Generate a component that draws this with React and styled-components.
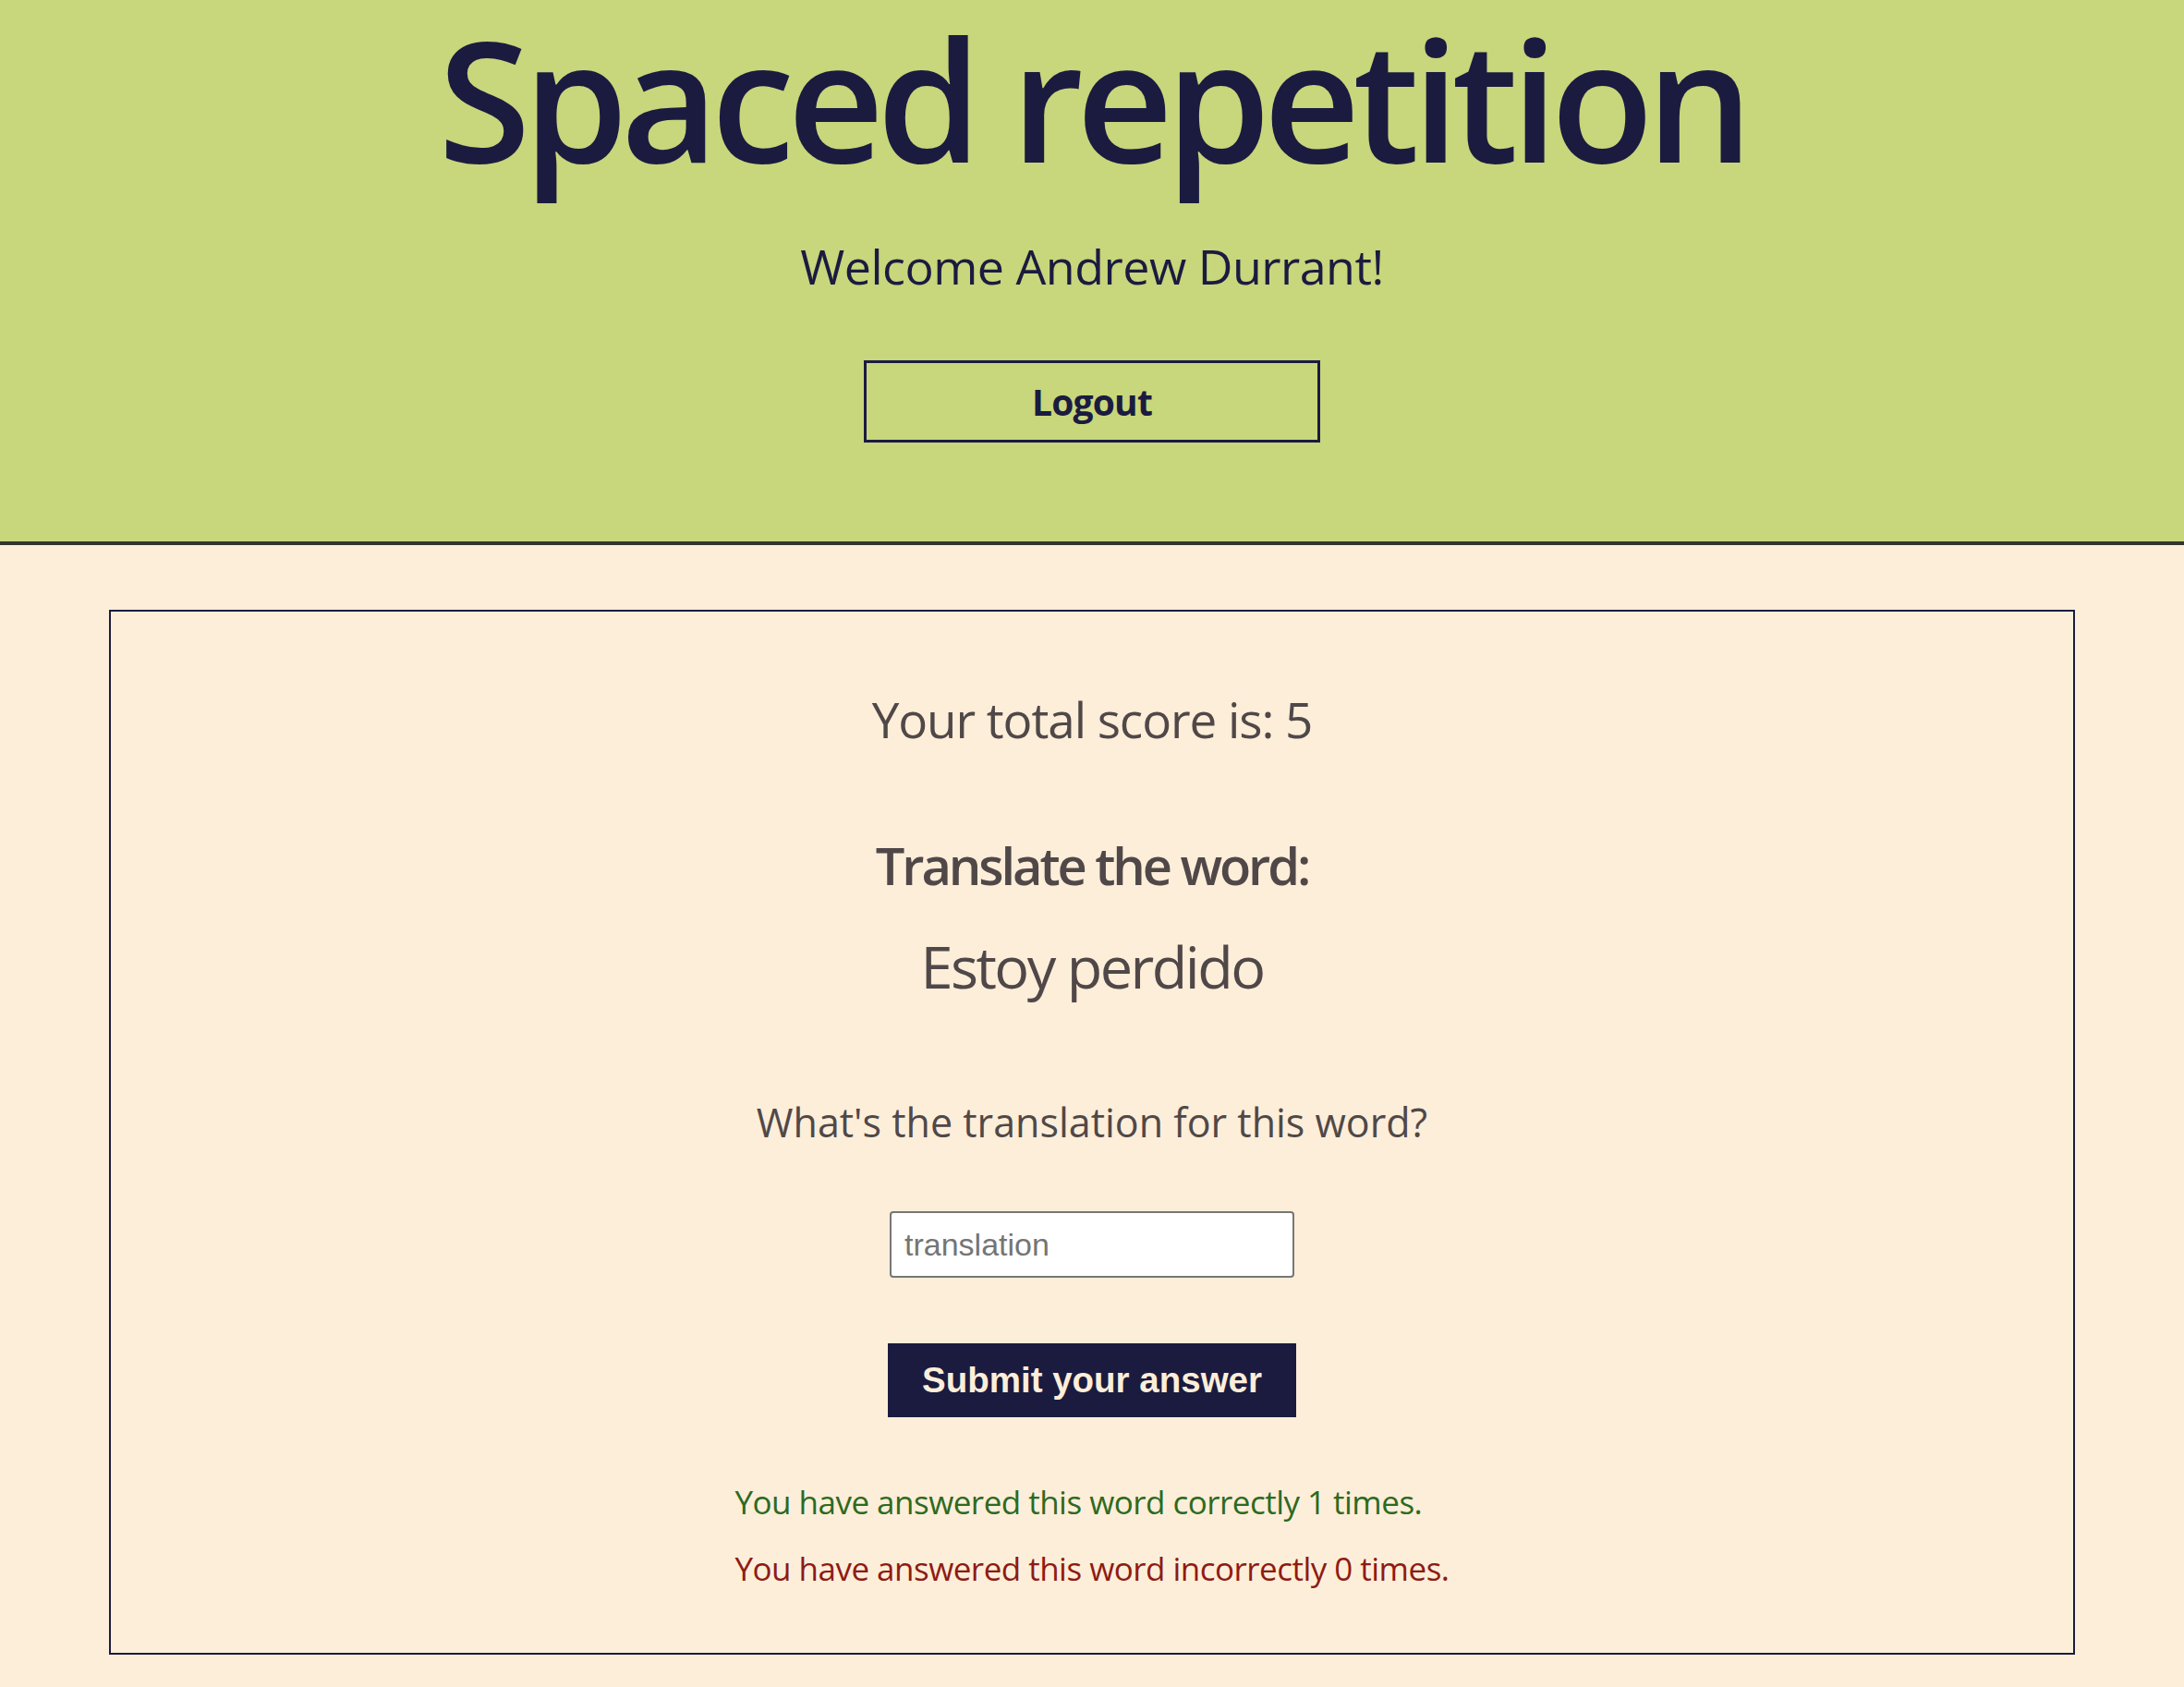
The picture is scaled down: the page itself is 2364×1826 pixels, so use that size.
import React from 'react';
import styled, { createGlobalStyle } from 'styled-components';

const GlobalStyle = createGlobalStyle`
  * {
    box-sizing: border-box;
  }
  html, body {
    margin: 0;
    padding: 0;
    background: #fdeed9;
  }
  body {
    font-family: "Open Sans", "Noto Sans", sans-serif;
    color: #504848;
  }
`;

const Header = styled.header`
  display: flex;
  flex-direction: column;
  align-items: center;
  background: #c8d67c;
  border-bottom: 4px solid #35332f;
  padding: 1px 0 107px;
`;

const Title = styled.h1`
  margin: 0;
  font-size: 182px;
  line-height: 1.15;
  font-weight: 600;
  letter-spacing: -0.043em;
  color: #1b1b40;
`;

const Welcome = styled.p`
  margin: 52px 0 0;
  font-size: 52px;
  line-height: 1;
  letter-spacing: -0.01em;
  color: #1b1b40;
`;

const LogoutButton = styled.button`
  margin-top: 76px;
  width: 494px;
  height: 89px;
  display: flex;
  align-items: center;
  justify-content: center;
  background: transparent;
  border: 3px solid #1b1b40;
  font-family: "Open Sans", sans-serif;
  font-size: 39px;
  font-weight: 700;
  letter-spacing: -0.02em;
  color: #1b1b40;
  cursor: pointer;
`;

const Main = styled.main`
  padding: 70px 0 34px;
`;

const Card = styled.section`
  width: 90%;
  margin: 0 auto;
  border: 2px solid #1b1b40;
  padding: 90px 0 74px;
  display: flex;
  flex-direction: column;
  align-items: center;
  text-align: center;
`;

const Score = styled.p`
  margin: 0;
  font-size: 53px;
  line-height: 1;
  letter-spacing: -0.02em;
`;

const Prompt = styled.h2`
  margin: 103px 0 0;
  font-size: 56px;
  line-height: 1;
  font-weight: 600;
  letter-spacing: -0.055em;
`;

const Word = styled.p`
  margin: 50px 0 0;
  font-size: 63px;
  line-height: 1;
  letter-spacing: -0.04em;
`;

const Form = styled.form`
  display: flex;
  flex-direction: column;
  align-items: center;
`;

const Question = styled.label`
  margin-top: 116px;
  font-size: 43px;
  line-height: 1;
`;

const AnswerInput = styled.input`
  margin-top: 75px;
  width: 438px;
  height: 72px;
  padding: 0 14px;
  border: 2px solid #767676;
  border-radius: 4px;
  background: #fff;
  font-family: "Liberation Sans", Arial, sans-serif;
  font-size: 34px;
  color: #222;
  &::placeholder {
    color: #757575;
  }
`;

const SubmitButton = styled.button`
  margin-top: 71px;
  width: 442px;
  height: 80px;
  border: none;
  background: #1b1b40;
  color: #fdeed9;
  font-family: "Liberation Sans", Arial, sans-serif;
  font-size: 38.5px;
  font-weight: 700;
  cursor: pointer;
`;

const FeedbackList = styled.div`
  margin-top: 74px;
  display: flex;
  flex-direction: column;
  align-items: flex-start;
  gap: 37px;
  text-align: left;
`;

const Feedback = styled.p`
  margin: 0;
  font-size: 35px;
  line-height: 1;
  letter-spacing: -0.015em;
  color: ${(p) => (p.$tone === 'good' ? '#2d6a1f' : '#8e1b14')};
`;

export default function App() {
  const correct = 1;
  const incorrect = 0;
  return (
    <>
      <GlobalStyle />
      <Header>
        <Title>Spaced repetition</Title>
        <Welcome>Welcome Andrew Durrant!</Welcome>
        <LogoutButton type="button">Logout</LogoutButton>
      </Header>
      <Main>
        <Card>
          <Score>Your total score is: 5</Score>
          <Prompt>Translate the word:</Prompt>
          <Word>Estoy perdido</Word>
          <Form onSubmit={(e) => e.preventDefault()}>
            <Question htmlFor="answer">What's the translation for this word?</Question>
            <AnswerInput id="answer" type="text" placeholder="translation" />
            <SubmitButton type="submit">Submit your answer</SubmitButton>
          </Form>
          <FeedbackList>
            <Feedback $tone="good">
              You have answered this word correctly {correct} times.
            </Feedback>
            <Feedback $tone="bad">
              You have answered this word incorrectly {incorrect} times.
            </Feedback>
          </FeedbackList>
        </Card>
      </Main>
    </>
  );
}
